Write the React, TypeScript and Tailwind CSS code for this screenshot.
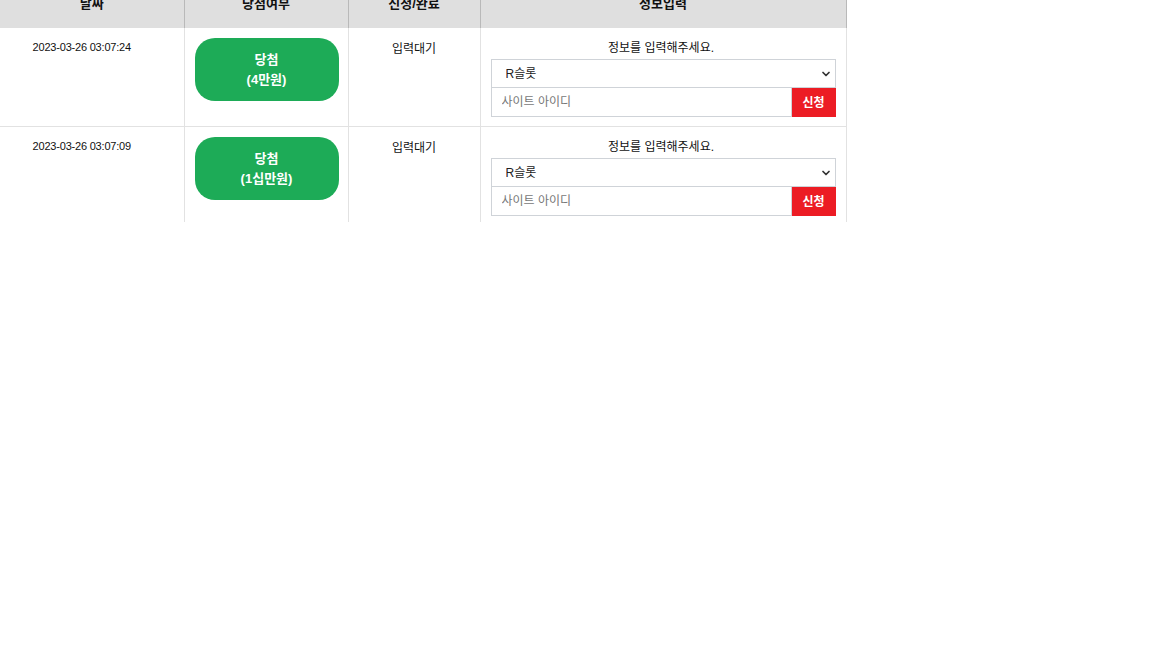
import { ChevronDown } from 'lucide-react';

const rows = [
  { date: '2023-03-26 03:07:24', prize: '(4만원)' },
  { date: '2023-03-26 03:07:09', prize: '(1십만원)' },
];

const font = { fontFamily: '"Liberation Sans", "Noto Sans CJK KR", sans-serif' };

function InfoForm() {
  return (
    <div className="flex flex-col px-[10px] pt-[12px]">
      <p className="text-center text-[12px] leading-[16px] text-[#111] mb-[3px] pr-[4px]">정보를 입력해주세요.</p>
      <div className="relative h-[29px] border border-[#cfd3d8] bg-white">
        <select className="w-full h-full appearance-none bg-white pl-[14px] text-[12px] text-[#222] outline-none">
          <option>R슬롯</option>
        </select>
        <ChevronDown className="absolute right-[3px] top-[8px] w-[12px] h-[12px] text-[#333] pointer-events-none" strokeWidth={3.5} />
      </div>
      <div className="flex h-[29px]">
        <input
          className="flex-1 min-w-0 border border-t-0 border-[#cfd3d8] px-[10px] text-[12px] outline-none placeholder:text-[#777]"
          placeholder="사이트 아이디"
        />
        <button className="w-[44px] bg-[#ec1c24] text-white text-[12px] font-bold">신청</button>
      </div>
    </div>
  );
}

export default function App() {
  return (
    <div className="h-[222px] overflow-hidden bg-white" style={font}>
      <table className="w-[846px] -mt-[20px] border-collapse table-fixed">
        <colgroup>
          <col className="w-[184px]" />
          <col className="w-[164px]" />
          <col className="w-[132px]" />
          <col className="w-[366px]" />
        </colgroup>
        <thead>
          <tr className="h-[48px] bg-[#dfdfdf] text-[13px] font-bold text-[#111]">
            <th className="border-r border-[#b9b9b9]">날짜</th>
            <th className="border-r border-[#b9b9b9]">당첨여부</th>
            <th className="border-r border-[#b9b9b9]">신청/완료</th>
            <th className="border-r border-[#b9b9b9]">정보입력</th>
          </tr>
        </thead>
        <tbody>
          {rows.map((r) => (
            <tr key={r.date} className="border-b border-[#e2e2e2] align-top">
              <td className="border-r border-[#e2e2e2] pt-[12px] pr-[20px] text-center text-[11px] leading-[14px] text-[#111] tracking-[-0.2px]">
                {r.date}
              </td>
              <td className="border-r border-[#e2e2e2] pt-[10px] pb-[25px] pl-[10px] pr-[9px]">
                <div className="h-[63px] rounded-[20px] bg-[#1dab57] flex flex-col items-center justify-center text-white text-[13px] font-bold leading-[20px]">
                  <span>당첨</span>
                  <span>{r.prize}</span>
                </div>
              </td>
              <td className="border-r border-[#e2e2e2] pt-[13px] text-center text-[12px] leading-[16px] text-[#111]">
                입력대기
              </td>
              <td className="border-r border-[#e2e2e2] pb-[9px]">
                <InfoForm />
              </td>
            </tr>
          ))}
        </tbody>
      </table>
    </div>
  );
}
